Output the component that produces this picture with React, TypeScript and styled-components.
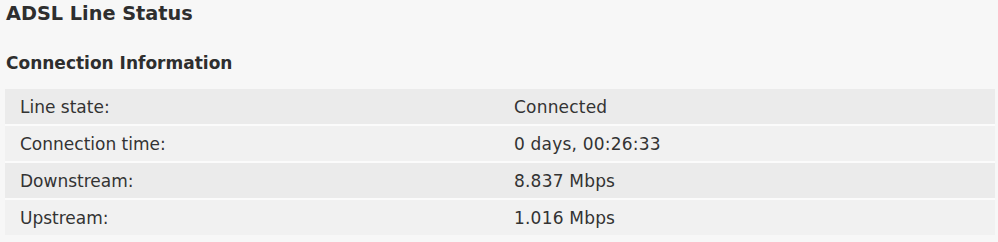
import styled, { createGlobalStyle } from 'styled-components'

const GlobalStyle = createGlobalStyle`
  html, body {
    margin: 0;
    padding: 0;
    background: #f7f7f7;
  }
  body {
    font-family: "DejaVu Sans", Verdana, sans-serif;
    color: #333;
  }
`

const Page = styled.div`
  width: 998px;
  height: 242px;
  padding: 0 3px 0 5px;
  box-sizing: border-box;
  background: #f7f7f7;
`

const Title = styled.h1`
  margin: 0;
  padding: 2px 0 0 1px;
  font-size: 19.3px;
  line-height: 24px;
  font-weight: bold;
  color: #2e2e2e;
`

const Section = styled.h2`
  margin: 0;
  padding: 27px 0 0 1px;
  font-size: 17px;
  line-height: 21px;
  font-weight: bold;
  color: #2e2e2e;
`

const Table = styled.div`
  margin-top: 15px;
  display: flex;
  flex-direction: column;
  gap: 2px;
  background: #fbfbfb;
`

const Row = styled.div<{ $alt?: boolean }>`
  display: grid;
  grid-template-columns: 509px 1fr;
  height: 35px;
  align-items: center;
  background: ${p => (p.$alt ? '#f1f1f1' : '#ebebeb')};
  font-size: 17px;
  color: #333;
`

const Label = styled.div`
  padding-left: 15px;
`

const Value = styled.div`
  letter-spacing: 0.2px;
`

const rows: [string, string][] = [
  ['Line state:', 'Connected'],
  ['Connection time:', '0 days, 00:26:33'],
  ['Downstream:', '8.837 Mbps'],
  ['Upstream:', '1.016 Mbps'],
]

export default function App() {
  return (
    <Page>
      <GlobalStyle />
      <Title>ADSL Line Status</Title>
      <Section>Connection Information</Section>
      <Table>
        {rows.map(([label, value], i) => (
          <Row key={label} $alt={i % 2 === 1}>
            <Label>{label}</Label>
            <Value>{value}</Value>
          </Row>
        ))}
      </Table>
    </Page>
  )
}
